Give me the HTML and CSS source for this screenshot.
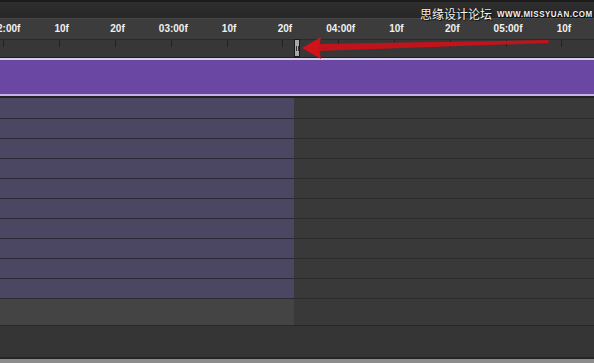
FILE: index.html
```html
<!DOCTYPE html>
<html lang="en">
<head>
    <meta charset="UTF-8">
    <title>时间轴</title>
    <link rel="stylesheet" href="styles.css">
</head>
<body>
    <div class="panel">
        <!-- 顶栏 -->
        <div class="topbar">
            <div class="mark"><span class="mark-cn">思缘设计论坛</span><span class="mark-en">WWW.MISSYUAN.COM</span></div>
        </div>
        <!-- 标尺 -->
        <div class="ruler">
            <div class="labels">
                <span>02:00f</span><span>10f</span><span>20f</span><span>03:00f</span><span>10f</span><span>20f</span>
                <span>04:00f</span><span>10f</span><span>20f</span><span>05:00f</span><span>10f</span>
            </div>
            <div class="ticks">
                <i></i><i></i><i></i><i></i><i></i><i></i><i></i><i></i><i></i><i></i><i></i>
            </div>
        </div>
        <!-- 工作区 -->
        <div class="workarea"></div>
        <!-- 图层 -->
        <div class="tracks">
            <div class="track"><div class="clip"></div></div>
            <div class="track"><div class="clip"></div></div>
            <div class="track"><div class="clip"></div></div>
            <div class="track"><div class="clip"></div></div>
            <div class="track"><div class="clip"></div></div>
            <div class="track"><div class="clip"></div></div>
            <div class="track"><div class="clip"></div></div>
            <div class="track"><div class="clip"></div></div>
            <div class="track"><div class="clip"></div></div>
            <div class="track"><div class="clip"></div></div>
            <div class="track tall"><div class="clip gray"></div></div>
        </div>
        <div class="bottom"></div>
        <div class="scroll"></div>

        <!-- 播放头和箭头 -->
        <div class="playhead"><b></b><b></b></div>
        <svg class="arrow" width="594" height="70" viewBox="0 0 594 70">
            <polygon points="318,44 548,40 549,43 318,51" fill="#c0141a"/>
            <polygon points="302,48 321,37 319,48 321,59" fill="#d0121a"/>
        </svg>
    </div>
</body>
</html>
```

FILE: styles.css
```css
*{
    margin: 0;
    padding: 0;
}
body{
    background: #333;
}
.panel{
    width: 594px;
    height: 363px;
    position: relative;
    overflow: hidden;
    background: #353535;
    font-family: "Liberation Sans", Arial, sans-serif;
}
.topbar{
    height: 19px;
    border-top: 2px solid #1c1c1c;
    box-sizing: border-box;
    background: linear-gradient(#2e2e2e, #272727);
    border-bottom: 1px solid #444;
}
.mark{
    position: absolute;
    top: 7px;
    left: 420px;
    display: flex;
    align-items: center;
    white-space: nowrap;
    color: #f4f4f4;
    text-shadow: 0 0 1px #000, 1px 1px 1px #111;
}
.mark-cn{
    font-family: "Noto Sans CJK SC", sans-serif;
    font-size: 12px;
    line-height: 14px;
}
.mark-en{
    margin-left: 5px;
    font-size: 8px;
    font-weight: bold;
    letter-spacing: 0.5px;
    transform: scaleY(1.1);
}
.ruler{
    height: 38px;
    background: #3c3c3c;
}
.labels{
    height: 20px;
    display: flex;
    margin-left: -22px;
}
.labels span{
    width: 55.8px;
    flex: none;
    text-align: center;
    color: #f0f0f0;
    font-size: 10px;
    font-weight: bold;
    line-height: 20px;
    white-space: nowrap;
}
.ticks{
    height: 17px;
    border-top: 1px solid #2a2a2a;
    background: #373737;
    display: flex;
    margin-left: -24px;
}
.ticks i{
    width: 55.8px;
    flex: none;
    display: flex;
    justify-content: center;
}
.ticks i::before{
    content: "";
    width: 1px;
    height: 7px;
    background: #222;
}
.workarea{
    height: 38px;
    border-top: 1px solid #1e1e1e;
    background: #6a47a2;
    box-shadow: inset 0 2px 0 #d6cdea, inset 0 -2px 0 #c4b4e4;
    border-bottom: 2px solid #222;
}
.track{
    height: 19px;
    border-bottom: 1px solid #2c2c2c;
    background: #393939;
    display: flex;
}
.track:first-child{
    height: 20px;
}
.clip{
    width: 294px;
    background: #4b4661;
    border-bottom: 1px solid #2c2838;
    margin-bottom: -1px;
}
.track.tall{
    height: 26px;
    border-bottom: 1px solid #262626;
}
.clip.gray{
    background: #444;
    border-bottom-color: #2a2a2a;
}
.bottom{
    height: 31px;
    border-bottom: 2px solid #262626;
}
.scroll{
    height: 10px;
    background: #8c8c8c;
}
.playhead{
    position: absolute;
    left: 294px;
    top: 39px;
    width: 4px;
    height: 16px;
    background: #a8a8a8;
    border: 1px solid #1a1a1a;
    display: flex;
    justify-content: center;
    align-items: center;
    gap: 1px;
}
.playhead b{
    width: 1px;
    height: 5px;
    background: #333;
}
.arrow{
    position: absolute;
    left: 0;
    top: 0;
}
```
